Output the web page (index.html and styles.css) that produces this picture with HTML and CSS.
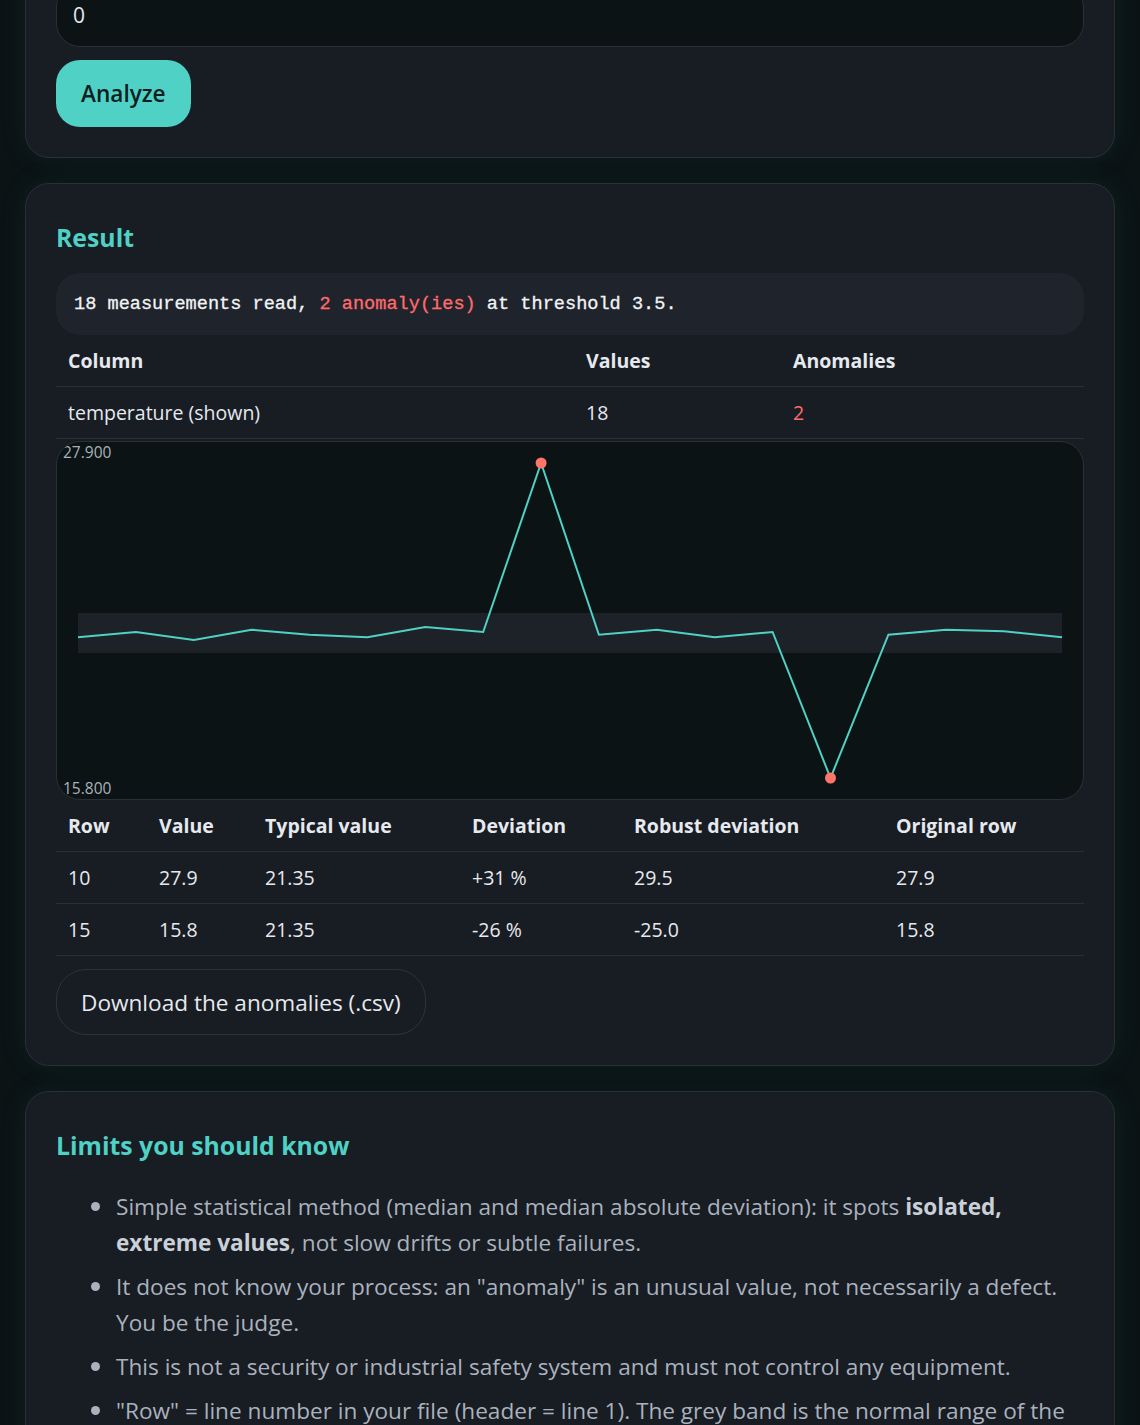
FILE: index.html
```html
<!DOCTYPE html>
<html lang="en">
<head>
  <meta charset="UTF-8">
  <meta name="viewport" content="width=device-width, initial-scale=1.0">
  <title>Anomaly finder</title>
  <link rel="stylesheet" href="styles.css">
</head>
<body>
  <div class="container">
    <!-- Settings (scrolled, only the bottom is visible) -->
    <div class="card card-top">
      <input type="text" class="field" value="0" />
      <button class="primary">Analyze</button>
    </div>

    <!-- Result -->
    <div class="card">
      <h2>Result</h2>
      <div class="summary">18 measurements read, <span class="bad">2 anomaly(ies)</span> at threshold 3.5.</div>

      <table class="cols">
        <thead>
          <tr><th class="c1">Column</th><th class="c2">Values</th><th>Anomalies</th></tr>
        </thead>
        <tbody>
          <tr><td>temperature (shown)</td><td>18</td><td class="bad">2</td></tr>
        </tbody>
      </table>

      <div class="chart">
        <svg viewBox="0 0 1028 359" width="1028" height="359">
          <rect x="22" y="172" width="984" height="40" fill="#1c2228" />
          <polyline fill="none" stroke="#4fd1c5" stroke-width="2"
            points="22,196.3 79.9,191 137.8,199 195.6,188.7 253.5,193.7 311.4,196.3 369.3,186 427.2,191 485.1,22 542.9,193.7 600.8,188.7 658.7,196.3 716.6,191 774.5,337 832.4,193.7 890.2,188.7 948.1,190.3 1006,196.3" />
          <circle cx="485.1" cy="22" r="5.5" fill="#ff7569" />
          <circle cx="774.5" cy="337" r="5.5" fill="#ff7569" />
          <text x="7" y="17" class="axis">27.900</text>
          <text x="7" y="353" class="axis">15.800</text>
        </svg>
      </div>

      <table class="rows">
        <thead>
          <tr>
            <th class="r1">Row</th><th class="r2">Value</th><th class="r3">Typical value</th>
            <th class="r4">Deviation</th><th class="r5">Robust deviation</th><th>Original row</th>
          </tr>
        </thead>
        <tbody>
          <tr><td>10</td><td>27.9</td><td>21.35</td><td>+31 %</td><td>29.5</td><td>27.9</td></tr>
          <tr><td>15</td><td>15.8</td><td>21.35</td><td>-26 %</td><td>-25.0</td><td>15.8</td></tr>
        </tbody>
      </table>

      <button class="ghost">Download the anomalies (.csv)</button>
    </div>

    <!-- Limits -->
    <div class="card">
      <h2>Limits you should know</h2>
      <ul class="limits">
        <li>Simple statistical method (median and median absolute deviation): it spots <strong>isolated, extreme values</strong>, not slow drifts or subtle failures.</li>
        <li>It does not know your process: an "anomaly" is an unusual value, not necessarily a defect. You be the judge.</li>
        <li>This is not a security or industrial safety system and must not control any equipment.</li>
        <li>"Row" = line number in your file (header = line 1). The grey band is the normal range of the values.</li>
      </ul>
    </div>
  </div>
</body>
</html>
```

FILE: styles.css
```css
body {
  font-family: "Segoe UI", "Open Sans", sans-serif;
  background-color: #0b1315;
  color: #e6e9ee;
  margin: 0;
  padding: 0;
}

.container {
  width: 1090px;
  margin: -48px auto 0;
  display: flex;
  flex-direction: column;
  gap: 25px;
}

.card {
  background-color: #181c23;
  border: 1px solid #2a2f38;
  border-radius: 24px;
  padding: 30px;
  box-shadow: 0 0 28px rgba(40, 120, 110, 0.12);
}

.card-top {
  display: flex;
  flex-direction: column;
  align-items: flex-start;
  gap: 13px;
}

h2 {
  color: #4fd1c5;
  font-size: 24.8px;
  line-height: 30px;
  margin: 8px 0 21px;
}

.field {
  box-sizing: border-box;
  width: 100%;
  height: 64px;
  padding: 0 16px;
  background-color: #0c1315;
  border: 1px solid #2a2f38;
  border-radius: 24px;
  color: #e6e9ee;
  font-family: inherit;
  font-size: 21px;
}

button {
  font-family: inherit;
  font-size: 22.6px;
  cursor: pointer;
  border-radius: 24px;
}

button.primary {
  height: 67px;
  padding: 0 25px;
  background-color: #4fd1c5;
  color: #0e1d20;
  border: none;
  font-weight: 600;
}

button.ghost {
  margin-top: 13px;
  height: 66px;
  padding: 0 24px;
  background-color: transparent;
  color: #e6e9ee;
  border: 1px solid #2d333c;
  border-radius: 30px;
}

.summary {
  background-color: #1f232b;
  border-radius: 24px;
  padding: 19px 18px 17px;
  font-family: "Liberation Mono", monospace;
  font-size: 18.6px;
  line-height: 26px;
  color: #f1f3f5;
  -webkit-text-stroke: 0.3px #f1f3f5;
}

.bad {
  color: #ff6b6b;
  -webkit-text-stroke-color: #ff6b6b;
}

table {
  width: 100%;
  border-collapse: collapse;
  font-size: 19.5px;
}

th, td {
  text-align: left;
  padding: 13px 12px;
  line-height: 25px;
  border-bottom: 1px solid #2a2f38;
}

th {
  font-weight: bold;
}

.c1 { width: 494px; }
.c2 { width: 183px; }

.r1 { width: 67px; }
.r2 { width: 82px; }
.r3 { width: 183px; }
.r4 { width: 138px; }
.r5 { width: 238px; }

.chart {
  margin-top: 2px;
  height: 359px;
  box-sizing: border-box;
  background-color: #0c1315;
  border: 1px solid #2a2f38;
  border-radius: 24px;
  overflow: hidden;
}

.chart svg {
  display: block;
  margin: -1px;
}

.axis {
  fill: #a9b1bb;
  font-family: "Segoe UI", "Open Sans", sans-serif;
  font-size: 15.5px;
}

.limits {
  margin: 27px 0 0;
  padding-left: 60px;
  color: #aab2bd;
  font-size: 22.6px;
  line-height: 36px;
}

.limits li {
  margin-bottom: 6px;
}

.limits li::marker {
  font-size: 26px;
}

.limits strong {
  color: #c9d0d8;
}
```
